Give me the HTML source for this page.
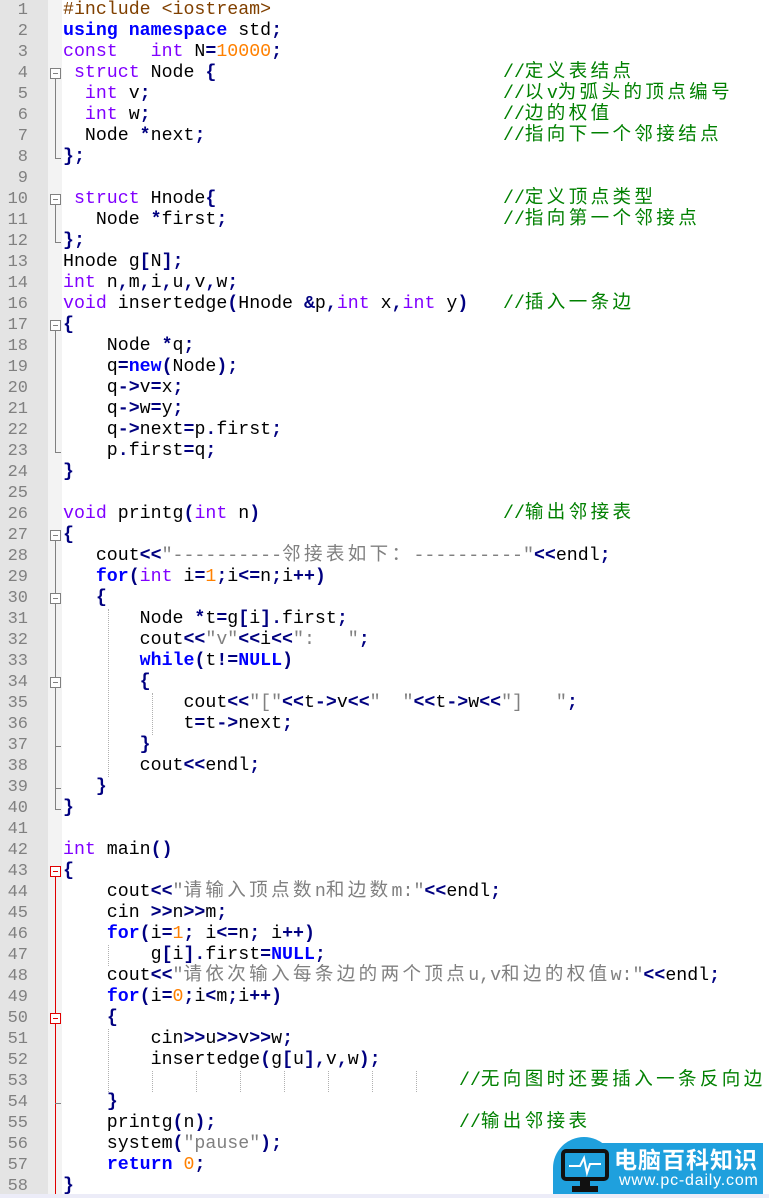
<!DOCTYPE html>
<html><head><meta charset="utf-8"><style>
body{margin:0;width:769px;height:1198px;background:#fff;position:relative;overflow:hidden}
#g{position:absolute;left:0;top:0;width:48px;height:1198px;background:#e4e4e4}
#f{position:absolute;left:48px;top:0;width:14px;height:1198px;background:#f3f3f3}
.ln{position:absolute;left:0;width:28px;text-align:right;font:17px "Liberation Mono",monospace;color:#808080;line-height:21px;height:21px}
.l{position:absolute;left:63px;white-space:pre;font:18.25px "Liberation Mono","Noto Sans CJK SC",monospace;line-height:21px;height:21px;color:#000}
.c{color:#008000}
.k{color:#0000ff;font-weight:bold}
.t{color:#8000ff}
.n{color:#ff8000}
.o{color:#000080;font-weight:bold}
.s{color:#808080}
.p{color:#804000}
.z{font-family:"Noto Sans CJK SC",sans-serif;font-size:18.5px;letter-spacing:3.4px;line-height:0}
.fb{position:absolute;left:50px;width:9px;height:9px;border:1px solid #808080;background:#fff}
.fb:after{content:"";position:absolute;left:2px;top:4px;width:5px;height:1px;background:#808080}
.fb.r{border-color:#e00000}
.fb.r:after{background:#e00000}
.fl{position:absolute;left:55px;width:1px;background:#808080}
.fe{position:absolute;left:55px;width:6px;height:1px;background:#808080}
.ig{position:absolute;width:0;border-left:1px dotted #b0b0b0}
</style></head><body>
<div id="g"></div><div id="f"></div>
<div id="nums"></div>
<div class="l" style="top:0px"><span class="p">#include &lt;iostream&gt;</span></div>
<div class="l" style="top:21px"><span class="k">using</span> <span class="k">namespace</span> std<span class="o">;</span></div>
<div class="l" style="top:42px"><span class="t">const</span>   <span class="t">int</span> N<span class="o">=</span><span class="n">10000</span><span class="o">;</span></div>
<div class="l" style="top:63px"> <span class="t">struct</span> Node <span class="o">{</span></div>
<div class="l" style="top:84px">  <span class="t">int</span> v<span class="o">;</span></div>
<div class="l" style="top:105px">  <span class="t">int</span> w<span class="o">;</span></div>
<div class="l" style="top:126px">  Node <span class="o">*</span>next<span class="o">;</span></div>
<div class="l" style="top:147px"><span class="o">};</span></div>
<div class="l" style="top:189px"> <span class="t">struct</span> Hnode<span class="o">{</span></div>
<div class="l" style="top:210px">   Node <span class="o">*</span>first<span class="o">;</span></div>
<div class="l" style="top:231px"><span class="o">};</span></div>
<div class="l" style="top:252px">Hnode g<span class="o">[</span>N<span class="o">];</span></div>
<div class="l" style="top:273px"><span class="t">int</span> n<span class="o">,</span>m<span class="o">,</span>i<span class="o">,</span>u<span class="o">,</span>v<span class="o">,</span>w<span class="o">;</span></div>
<div class="l" style="top:294px"><span class="t">void</span> insertedge<span class="o">(</span>Hnode <span class="o">&amp;</span>p<span class="o">,</span><span class="t">int</span> x<span class="o">,</span><span class="t">int</span> y<span class="o">)</span></div>
<div class="l" style="top:315px"><span class="o">{</span></div>
<div class="l" style="top:336px">    Node <span class="o">*</span>q<span class="o">;</span></div>
<div class="l" style="top:357px">    q<span class="o">=</span><span class="k">new</span><span class="o">(</span>Node<span class="o">);</span></div>
<div class="l" style="top:378px">    q<span class="o">-&gt;</span>v<span class="o">=</span>x<span class="o">;</span></div>
<div class="l" style="top:399px">    q<span class="o">-&gt;</span>w<span class="o">=</span>y<span class="o">;</span></div>
<div class="l" style="top:420px">    q<span class="o">-&gt;</span>next<span class="o">=</span>p<span class="o">.</span>first<span class="o">;</span></div>
<div class="l" style="top:441px">    p<span class="o">.</span>first<span class="o">=</span>q<span class="o">;</span></div>
<div class="l" style="top:462px"><span class="o">}</span></div>
<div class="l" style="top:504px"><span class="t">void</span> printg<span class="o">(</span><span class="t">int</span> n<span class="o">)</span></div>
<div class="l" style="top:525px"><span class="o">{</span></div>
<div class="l" style="top:546px">   cout<span class="o">&lt;&lt;</span><span class="s">"----------<span class="z">邻接表如下：</span>----------"</span><span class="o">&lt;&lt;</span>endl<span class="o">;</span></div>
<div class="l" style="top:567px">   <span class="k">for</span><span class="o">(</span><span class="t">int</span> i<span class="o">=</span><span class="n">1</span><span class="o">;</span>i<span class="o">&lt;=</span>n<span class="o">;</span>i<span class="o">++)</span></div>
<div class="l" style="top:588px">   <span class="o">{</span></div>
<div class="l" style="top:609px">       Node <span class="o">*</span>t<span class="o">=</span>g<span class="o">[</span>i<span class="o">].</span>first<span class="o">;</span></div>
<div class="l" style="top:630px">       cout<span class="o">&lt;&lt;</span><span class="s">"v"</span><span class="o">&lt;&lt;</span>i<span class="o">&lt;&lt;</span><span class="s">":   "</span><span class="o">;</span></div>
<div class="l" style="top:651px">       <span class="k">while</span><span class="o">(</span>t<span class="o">!=</span><span class="k">NULL</span><span class="o">)</span></div>
<div class="l" style="top:672px">       <span class="o">{</span></div>
<div class="l" style="top:693px">           cout<span class="o">&lt;&lt;</span><span class="s">"["</span><span class="o">&lt;&lt;</span>t<span class="o">-&gt;</span>v<span class="o">&lt;&lt;</span><span class="s">"  "</span><span class="o">&lt;&lt;</span>t<span class="o">-&gt;</span>w<span class="o">&lt;&lt;</span><span class="s">"]   "</span><span class="o">;</span></div>
<div class="l" style="top:714px">           t<span class="o">=</span>t<span class="o">-&gt;</span>next<span class="o">;</span></div>
<div class="l" style="top:735px">       <span class="o">}</span></div>
<div class="l" style="top:756px">       cout<span class="o">&lt;&lt;</span>endl<span class="o">;</span></div>
<div class="l" style="top:777px">   <span class="o">}</span></div>
<div class="l" style="top:798px"><span class="o">}</span></div>
<div class="l" style="top:840px"><span class="t">int</span> main<span class="o">()</span></div>
<div class="l" style="top:861px"><span class="o">{</span></div>
<div class="l" style="top:882px">    cout<span class="o">&lt;&lt;</span><span class="s">"<span class="z">请输入顶点数</span>n<span class="z">和边数</span>m:"</span><span class="o">&lt;&lt;</span>endl<span class="o">;</span></div>
<div class="l" style="top:903px">    cin <span class="o">&gt;&gt;</span>n<span class="o">&gt;&gt;</span>m<span class="o">;</span></div>
<div class="l" style="top:924px">    <span class="k">for</span><span class="o">(</span>i<span class="o">=</span><span class="n">1</span><span class="o">;</span> i<span class="o">&lt;=</span>n<span class="o">;</span> i<span class="o">++)</span></div>
<div class="l" style="top:945px">        g<span class="o">[</span>i<span class="o">].</span>first<span class="o">=</span><span class="k">NULL</span><span class="o">;</span></div>
<div class="l" style="top:966px">    cout<span class="o">&lt;&lt;</span><span class="s">"<span class="z">请依次输入每条边的两个顶点</span>u,v<span class="z">和边的权值</span>w:"</span><span class="o">&lt;&lt;</span>endl<span class="o">;</span></div>
<div class="l" style="top:987px">    <span class="k">for</span><span class="o">(</span>i<span class="o">=</span><span class="n">0</span><span class="o">;</span>i<span class="o">&lt;</span>m<span class="o">;</span>i<span class="o">++)</span></div>
<div class="l" style="top:1008px">    <span class="o">{</span></div>
<div class="l" style="top:1029px">        cin<span class="o">&gt;&gt;</span>u<span class="o">&gt;&gt;</span>v<span class="o">&gt;&gt;</span>w<span class="o">;</span></div>
<div class="l" style="top:1050px">        insertedge<span class="o">(</span>g<span class="o">[</span>u<span class="o">],</span>v<span class="o">,</span>w<span class="o">);</span></div>
<div class="l" style="top:1092px">    <span class="o">}</span></div>
<div class="l" style="top:1113px">    printg<span class="o">(</span>n<span class="o">);</span></div>
<div class="l" style="top:1134px">    system<span class="o">(</span><span class="s">"pause"</span><span class="o">);</span></div>
<div class="l" style="top:1155px">    <span class="k">return</span> <span class="n">0</span><span class="o">;</span></div>
<div class="l" style="top:1176px"><span class="o">}</span></div>
<div class="l c" style="left:503px;top:63px">//<span class="z">定义表结点</span></div>
<div class="l c" style="left:503px;top:84px">//<span class="z">以</span>v<span class="z">为弧头的顶点编号</span></div>
<div class="l c" style="left:503px;top:105px">//<span class="z">边的权值</span></div>
<div class="l c" style="left:503px;top:126px">//<span class="z">指向下一个邻接结点</span></div>
<div class="l c" style="left:503px;top:189px">//<span class="z">定义顶点类型</span></div>
<div class="l c" style="left:503px;top:210px">//<span class="z">指向第一个邻接点</span></div>
<div class="l c" style="left:503px;top:294px">//<span class="z">插入一条边</span></div>
<div class="l c" style="left:503px;top:504px">//<span class="z">输出邻接表</span></div>
<div class="l c" style="left:459px;top:1071px">//<span class="z">无向图时还要插入一条反向边</span></div>
<div class="l c" style="left:459px;top:1113px">//<span class="z">输出邻接表</span></div>
<div class="fl" style="top:79px;height:79px"></div><div class="fe" style="top:158px"></div>
<div class="fb" style="top:68px"></div>
<div class="fl" style="top:205px;height:37px"></div><div class="fe" style="top:242px"></div>
<div class="fb" style="top:194px"></div>
<div class="fl" style="top:331px;height:121px"></div><div class="fe" style="top:452px"></div>
<div class="fb" style="top:320px"></div>
<div class="fl" style="top:541px;height:268px"></div><div class="fe" style="top:809px"></div>
<div class="fb" style="top:530px"></div>
<div class="fb" style="top:593px"></div>
<div class="fe" style="top:788px"></div>
<div class="fb" style="top:677px"></div>
<div class="fe" style="top:746px"></div>
<div class="fl" style="top:877px;height:321px;background:#e00000"></div>
<div class="fb r" style="top:866px"></div>
<div class="fb r" style="top:1013px"></div>
<div class="fe" style="top:1103px"></div>
<div class="ig" style="left:108px;top:609px;height:168px"></div>
<div class="ig" style="left:152px;top:693px;height:42px"></div>
<div class="ig" style="left:108px;top:945px;height:21px"></div>
<div class="ig" style="left:108px;top:1029px;height:63px"></div>
<div class="ig" style="left:152px;top:1071px;height:21px"></div>
<div class="ig" style="left:196px;top:1071px;height:21px"></div>
<div class="ig" style="left:240px;top:1071px;height:21px"></div>
<div class="ig" style="left:284px;top:1071px;height:21px"></div>
<div class="ig" style="left:328px;top:1071px;height:21px"></div>
<div class="ig" style="left:372px;top:1071px;height:21px"></div>
<div class="ig" style="left:416px;top:1071px;height:21px"></div>
<div style="position:absolute;left:0;top:1194px;width:769px;height:4px;background:#ececf8"></div>
<div style="position:absolute;left:553px;top:1137px;width:62px;height:57px;border-radius:31px 31px 0 0;background:#1fa0dd"></div>
<div style="position:absolute;left:600px;top:1143px;width:163px;height:51px;background:#1fa0dd"></div>
<svg style="position:absolute;left:560px;top:1148px" width="52" height="46" viewBox="0 0 52 46">
<rect x="3" y="3" width="44" height="28" rx="3" fill="#1fa0dd" stroke="#111" stroke-width="4"/>
<path d="M9 18 H20 L24 10 L27 25 L30 16 H41" fill="none" stroke="#fff" stroke-width="2"/>
<rect x="20" y="32" width="10" height="6" fill="#111"/><rect x="12" y="38" width="26" height="6" fill="#111"/>
</svg>
<div style="position:absolute;left:614px;top:1145px;font:bold 23px 'Noto Sans CJK SC',sans-serif;color:#fff;line-height:26px;white-space:nowrap;letter-spacing:1px">电脑百科知识</div>
<div style="position:absolute;left:619px;top:1172px;font:16px 'Liberation Sans',sans-serif;color:#fff;line-height:18px;letter-spacing:0.8px;white-space:nowrap">www.pc-daily.com</div>
<script>
var h='',r=0;for(var i=1;i<=58;i++){if(i==15)continue;h+='<div class="ln" style="top:'+(r*21)+'px">'+i+'</div>';r++;}
document.getElementById('nums').innerHTML=h;
</script>
</body></html>
